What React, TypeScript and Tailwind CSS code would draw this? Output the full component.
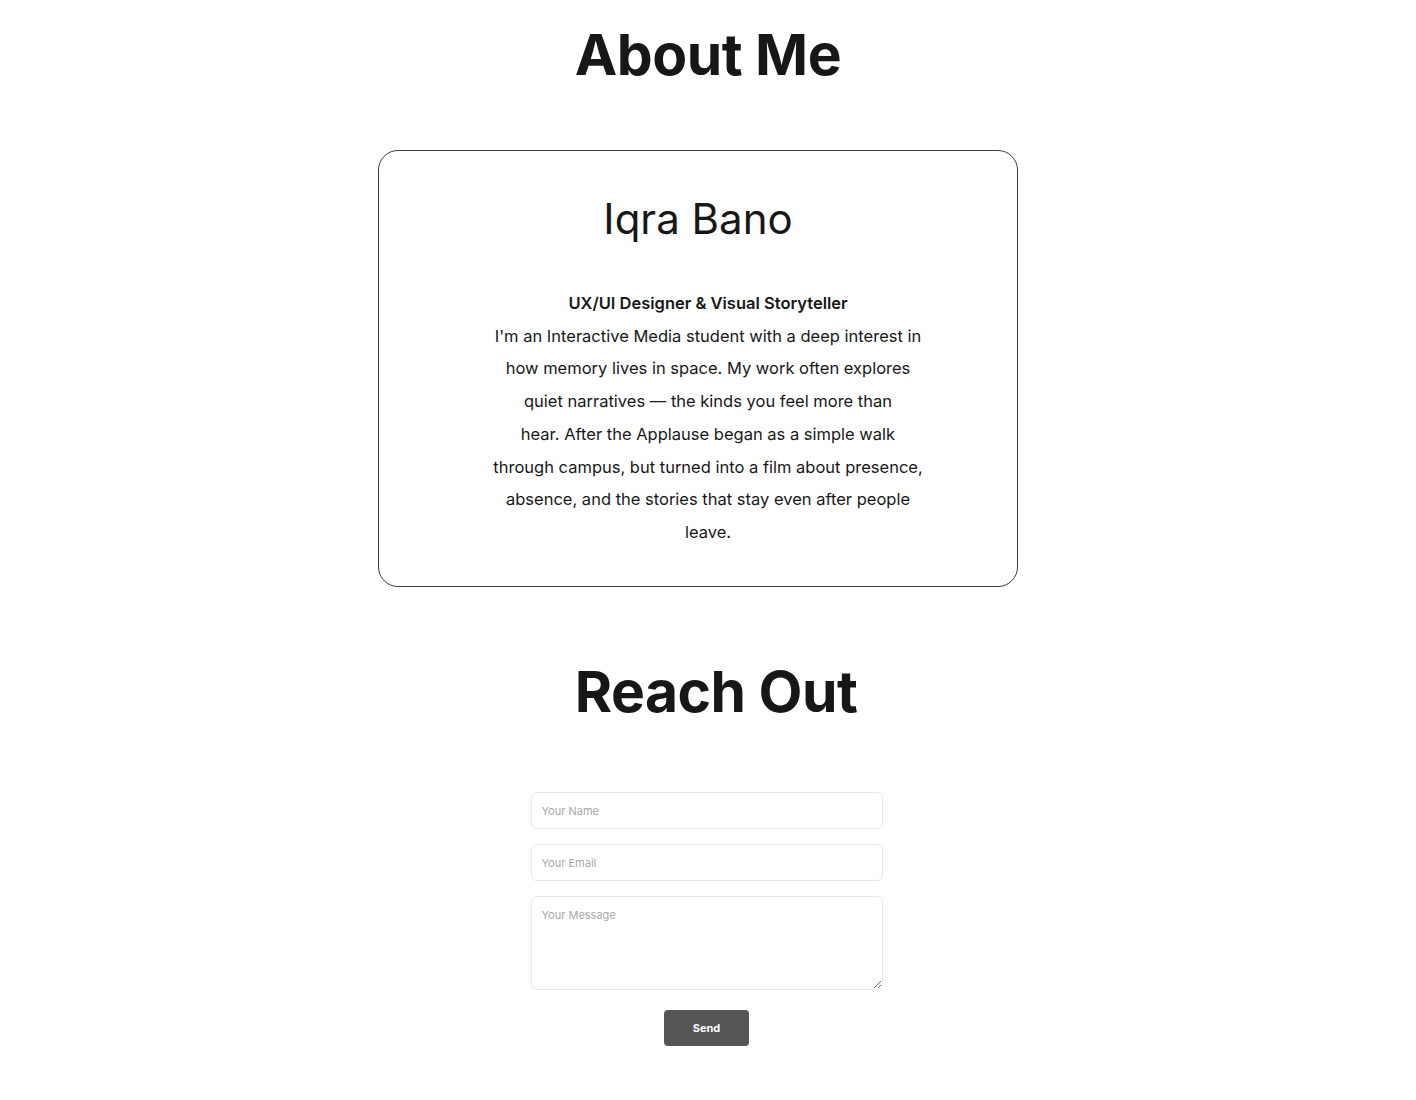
import React from 'react';

const lines = [
  "I'm an Interactive Media student with a deep interest in",
  'how memory lives in space. My work often explores',
  'quiet narratives — the kinds you feel more than',
  'hear. After the Applause began as a simple walk',
  'through campus, but turned into a film about presence,',
  'absence, and the stories that stay even after people',
  'leave.',
];

export default function App() {
  return (
    <div className="min-h-[1100px] bg-white text-[#171717] font-['Inter',sans-serif]">
      {/* About */}
      <section className="flex flex-col items-center pt-[20px]">
        <h1 className="text-[57px] font-bold leading-[70px] tracking-[-0.5px]">About Me</h1>

        <div className="mt-[60px] mr-[20px] w-[640px] h-[437px] rounded-[20px] border border-[#3a3a3a] flex flex-col items-center">
          <h2 className="pt-[40px] text-[42px] leading-[56px] font-normal">Iqra Bano</h2>
          <div className="mt-[40px] ml-[20px] text-center text-[16.5px] leading-[32.7px]">
            <p className="font-semibold">UX/UI Designer &amp; Visual Storyteller</p>
            <p>
              {lines.map((l, i) => (
                <React.Fragment key={i}>
                  {l}
                  {i < lines.length - 1 && <br />}
                </React.Fragment>
              ))}
            </p>
          </div>
        </div>
      </section>

      {/* Contact */}
      <section className="flex flex-col items-center mt-[70px]">
        <h2 className="ml-[16px] text-[57px] font-bold leading-[70px] tracking-[-0.5px]">Reach Out</h2>

        <form className="mt-[65px] mr-[3px] w-[352px] flex flex-col gap-[15px]" onSubmit={(e) => e.preventDefault()}>
          <input
            type="text"
            placeholder="Your Name"
            className="h-[37px] rounded-[6px] border border-[#e8e8ec] px-[10px] text-[11px] placeholder:text-[#a8a8a8] outline-none"
          />
          <input
            type="email"
            placeholder="Your Email"
            className="h-[37px] rounded-[6px] border border-[#e8e8ec] px-[10px] text-[11px] placeholder:text-[#a8a8a8] outline-none"
          />
          <textarea
            placeholder="Your Message"
            className="h-[94px] rounded-[6px] border border-[#e8e8ec] px-[10px] py-[10px] text-[11px] placeholder:text-[#a8a8a8] outline-none"
          />
          <div className="flex justify-center mt-[5px]">
            <button
              type="submit"
              className="w-[85px] h-[36px] rounded-[4px] bg-[#555555] text-white text-[11px] font-bold"
            >
              Send
            </button>
          </div>
        </form>
      </section>
    </div>
  );
}
